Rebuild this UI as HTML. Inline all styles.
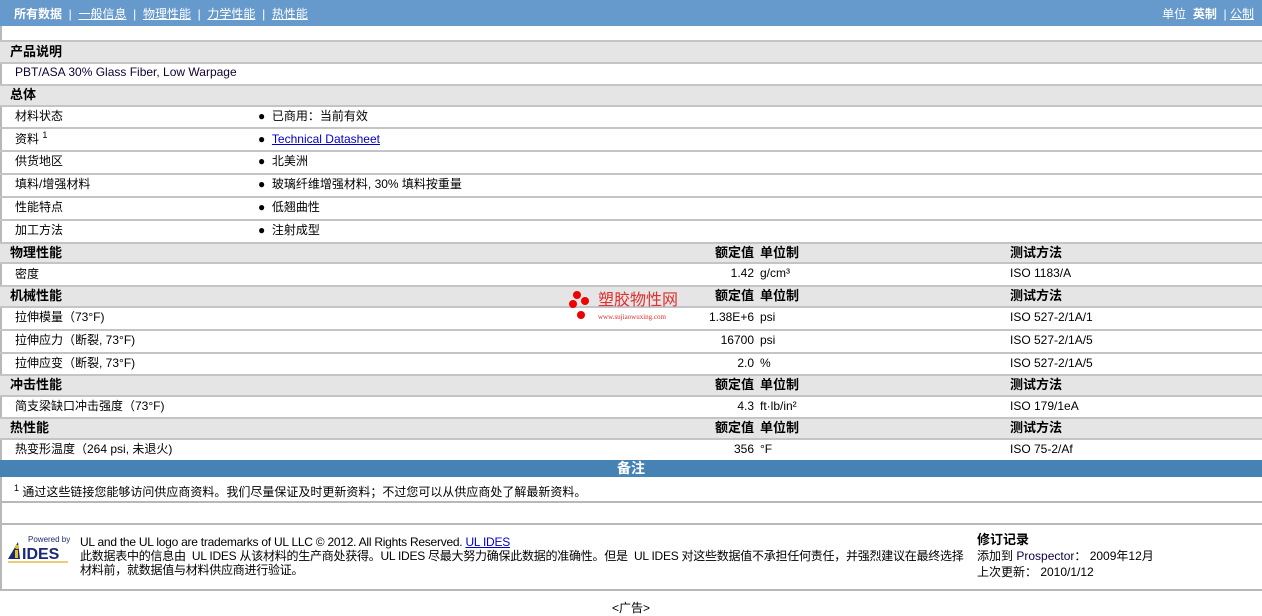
<!DOCTYPE html>
<html><head><meta charset="utf-8"><style>
*{margin:0;padding:0;box-sizing:border-box}
body{width:1262px;height:616px;background:#fff;font-family:"Liberation Sans","Noto Sans CJK SC",sans-serif;font-size:12px;color:#000;position:relative;overflow:hidden}
.a{position:absolute;white-space:nowrap}
.nav{left:0;top:0;width:1262px;height:26px;background:#6699cc;color:#fff;font-size:12px}
.nav a{color:#fff;text-decoration:underline}
.r{position:absolute;left:0;width:1262px;border-top:2px solid #c4c4c8}
.g{background:#e5e5e5}
.r span{position:absolute;white-space:nowrap}
.h{font-weight:bold;font-size:13px;left:10px}
.l{left:15px}
.b{left:258px}
.v{right:508px;text-align:right}
.u{left:760px}
.t{left:1010px}
.hb{font-weight:bold}
</style></head><body>
<div style="position:absolute;left:0;top:26px;width:2px;height:564px;background:#b8b8bc"></div>
<div class="a nav"><span class="a" style="left:14px;top:5px"><b>所有数据</b> &nbsp;|&nbsp; <a>一般信息</a> &nbsp;|&nbsp; <a>物理性能</a> &nbsp;|&nbsp; <a>力学性能</a> &nbsp;|&nbsp; <a>热性能</a></span>
<span class="a" style="right:8px;top:5px">单位 &nbsp;<b>英制</b> &nbsp;| <a>公制</a></span></div>

<div class="r g" style="top:40px;height:22px"><span class="h" style="top:-1px">产品说明</span></div>
<div class="r" style="top:62px;height:22px"><span class="l" style="top:1px;color:#110033">PBT/ASA 30% Glass Fiber, Low Warpage</span></div>
<div class="r g" style="top:84px;height:21px"><span class="h" style="top:-2px">总体</span></div>
<div class="r" style="top:105px;height:22px"><span class="l" style="top:0px">材料状态</span><span class="b" style="top:0px">● &nbsp;已商用：当前有效</span></div>
<div class="r" style="top:127px;height:23px"><span class="l" style="top:1px">资料 <sup style="font-size:9px">1</sup></span><span class="b" style="top:3px">● &nbsp;<a style="color:#0000cc;text-decoration:underline">Technical Datasheet</a></span></div>
<div class="r" style="top:150px;height:23px"><span class="l" style="top:0px">供货地区</span><span class="b" style="top:0px">● &nbsp;北美洲</span></div>
<div class="r" style="top:173px;height:23px"><span class="l" style="top:0px">填料/增强材料</span><span class="b" style="top:0px">● &nbsp;玻璃纤维增强材料, 30% 填料按重量</span></div>
<div class="r" style="top:196px;height:23px"><span class="l" style="top:0px">性能特点</span><span class="b" style="top:0px">● &nbsp;低翘曲性</span></div>
<div class="r" style="top:219px;height:23px"><span class="l" style="top:0px">加工方法</span><span class="b" style="top:0px">● &nbsp;注射成型</span></div>

<div class="r g" style="top:242px;height:20px"><span class="h" style="top:-2px">物理性能</span><span class="v hb" style="top:-2px;font-size:13px">额定值</span><span class="u hb" style="top:-2px;font-size:13px">单位制</span><span class="t hb" style="top:-2px;font-size:13px">测试方法</span></div>
<div class="r" style="top:262px;height:23px"><span class="l" style="top:1px">密度</span><span class="v" style="top:2px">1.42</span><span class="u" style="top:2px">g/cm³</span><span class="t" style="top:2px">ISO 1183/A</span></div>
<div class="r g" style="top:285px;height:21px"><span class="h" style="top:-2px">机械性能</span><span class="v hb" style="top:-2px;font-size:13px">额定值</span><span class="u hb" style="top:-2px;font-size:13px">单位制</span><span class="t hb" style="top:-2px;font-size:13px">测试方法</span></div>
<div class="r" style="top:306px;height:23px"><span class="l" style="top:0px">拉伸模量（73°F)</span><span class="v" style="top:2px">1.38E+6</span><span class="u" style="top:2px">psi</span><span class="t" style="top:2px">ISO 527-2/1A/1</span></div>
<div class="r" style="top:329px;height:23px"><span class="l" style="top:0px">拉伸应力（断裂, 73°F)</span><span class="v" style="top:2px">16700</span><span class="u" style="top:2px">psi</span><span class="t" style="top:2px">ISO 527-2/1A/5</span></div>
<div class="r" style="top:352px;height:22px"><span class="l" style="top:0px">拉伸应变（断裂, 73°F)</span><span class="v" style="top:2px">2.0</span><span class="u" style="top:2px">%</span><span class="t" style="top:2px">ISO 527-2/1A/5</span></div>
<div class="r g" style="top:374px;height:21px"><span class="h" style="top:-2px">冲击性能</span><span class="v hb" style="top:-2px;font-size:13px">额定值</span><span class="u hb" style="top:-2px;font-size:13px">单位制</span><span class="t hb" style="top:-2px;font-size:13px">测试方法</span></div>
<div class="r" style="top:395px;height:22px"><span class="l" style="top:0px">简支梁缺口冲击强度（73°F)</span><span class="v" style="top:2px">4.3</span><span class="u" style="top:2px">ft·lb/in²</span><span class="t" style="top:2px">ISO 179/1eA</span></div>
<div class="r g" style="top:417px;height:21px"><span class="h" style="top:-2px">热性能</span><span class="v hb" style="top:-2px;font-size:13px">额定值</span><span class="u hb" style="top:-2px;font-size:13px">单位制</span><span class="t hb" style="top:-2px;font-size:13px">测试方法</span></div>
<div class="r" style="top:438px;height:22px"><span class="l" style="top:0px">热变形温度（264 psi, 未退火)</span><span class="v" style="top:2px">356</span><span class="u" style="top:2px">°F</span><span class="t" style="top:2px">ISO 75-2/Af</span></div>

<div class="a" style="left:0;top:460px;width:1262px;height:17px;background:#4682b4;color:#fff;font-weight:bold;font-size:14px;text-align:center;line-height:16px">备注</div>
<div class="a" style="left:14px;top:483px"><sup style="font-size:9px">1</sup> 通过这些链接您能够访问供应商资料。我们尽量保证及时更新资料；不过您可以从供应商处了解最新资料。</div>
<div class="a" style="left:0;top:501px;width:1262px;height:2px;background:#b8b8bc"></div>
<div class="a" style="left:0;top:523px;width:1262px;height:2px;background:#b8b8bc"></div>
<div class="a" style="left:0;top:589px;width:1262px;height:2px;background:#b8b8bc"></div>

<svg class="a" style="left:6px;top:534px" width="64" height="30" viewBox="0 0 64 30">
<text x="22" y="8" font-size="8" fill="#1a2a7a" font-family="Liberation Sans">Powered by</text>
<polygon points="2,25 12,8 14,25" fill="#1a2a7a"/><circle cx="11" cy="13" r="2" fill="#e8c020"/><rect x="9" y="16" width="3" height="8" fill="#e8c020"/>
<text x="16" y="25" font-size="16" font-weight="bold" fill="#1a2a7a" font-family="Liberation Sans">IDES</text>
<rect x="2" y="27" width="60" height="2" fill="#e8d070"/></svg>
<div class="a" style="left:80px;top:535px;line-height:14px;letter-spacing:-0.25px">UL and the UL logo are trademarks of UL LLC © 2012. All Rights Reserved. <a style="color:#0000cc;text-decoration:underline">UL IDES</a><br>此数据表中的信息由 &nbsp;UL IDES 从该材料的生产商处获得。UL IDES 尽最大努力确保此数据的准确性。但是 &nbsp;UL IDES 对这些数据值不承担任何责任，并强烈建议在最终选择<br>材料前，就数据值与材料供应商进行验证。</div>
<div class="a" style="left:977px;top:532px;line-height:16px"><b style="font-size:13px">修订记录</b><br>添加到 <span style="color:#110044">Prospector</span>： 2009年12月<br>上次更新： 2010/1/12</div>
<div class="a" style="left:612px;top:599px">&lt;广告&gt;</div>

<div class="a" style="left:568px;top:290px;width:30px;height:34px">
<div class="a" style="left:5px;top:1px;width:8px;height:8px;border-radius:50%;background:#e00"></div>
<div class="a" style="left:13px;top:7px;width:8px;height:8px;border-radius:50%;background:#e00"></div>
<div class="a" style="left:1px;top:10px;width:8px;height:8px;border-radius:50%;background:#e00"></div>
<div class="a" style="left:9px;top:21px;width:8px;height:8px;border-radius:50%;background:#e00"></div></div>
<div class="a" style="left:598px;top:292px;color:#e03030;font-size:16px;line-height:18px">塑胶物性网</div>
<div class="a" style="left:598px;top:313px;color:#e03030;font-size:7px;font-family:'Liberation Serif',serif">www.sujiaowuxing.com</div>
</body></html>
